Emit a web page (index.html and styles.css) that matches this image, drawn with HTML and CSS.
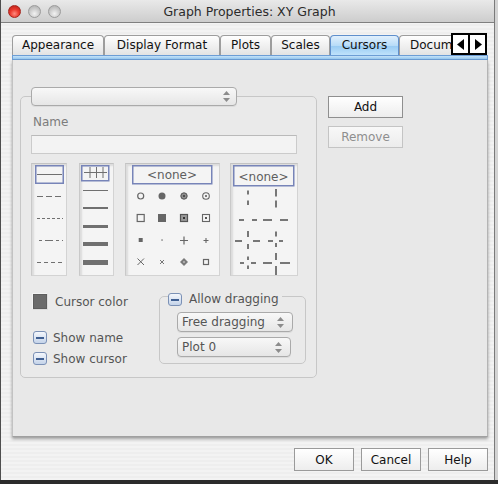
FILE: index.html
```html
<!DOCTYPE html>
<html>
<head>
<meta charset="utf-8">
<link rel="stylesheet" href="styles.css">
</head>
<body>
<div class="window">
  <div class="titlebar">
    <div class="lights"><span class="light red"></span><span class="light"></span><span class="light"></span></div>
    <div class="title">Graph Properties: XY Graph</div>
    <div></div>
  </div>

  <div class="tabs">
    <div class="tab t-app">Appearance</div>
    <div class="tab t-disp">Display Format</div>
    <div class="tab t-plots">Plots</div>
    <div class="tab t-scales">Scales</div>
    <div class="tab t-cursors selected">Cursors</div>
    <div class="tab t-doc">Documentation</div>
    <div class="scroller">
      <span class="arrow"><svg width="8" height="11" viewBox="0 0 8 11"><polygon points="7,0 7,11 0,5.5" fill="#000"/></svg></span>
      <span class="arrow"><svg width="8" height="11" viewBox="0 0 8 11"><polygon points="1,0 1,11 8,5.5" fill="#000"/></svg></span>
    </div>
  </div>
  <div class="tab-strip"></div>

  <div class="panel">
    <fieldset class="cursor-group">
      <legend class="main-legend">
        <div class="popup popup-main"><span></span>
          <svg class="updown" width="7" height="11" viewBox="0 0 7 11"><polygon points="0,4 3.5,0 7,4" fill="#8c8c8c"/><polygon points="0,7 3.5,11 7,7" fill="#8c8c8c"/></svg>
        </div>
      </legend>
      <div class="name-label">Name</div>
      <div class="textfield"></div>

      <div class="lists">
        <div class="list l1">
          <svg width="34" height="111" viewBox="0 0 34 111">
            <rect x="3.75" y="1.75" width="27.5" height="17.5" fill="none" stroke="#7784b8" stroke-width="1.5"/>
            <g stroke="#707070" stroke-width="1" fill="none">
              <line x1="5" y1="10.5" x2="30" y2="10.5"/>
              <line x1="5" y1="32.5" x2="31" y2="32.5" stroke-dasharray="6 3"/>
              <line x1="5" y1="54.5" x2="31" y2="54.5" stroke-dasharray="3 2"/>
              <line x1="7" y1="76.5" x2="31" y2="76.5" stroke-dasharray="3 3 8 3"/>
              <line x1="5" y1="98.5" x2="31" y2="98.5" stroke-dasharray="4 3"/>
            </g>
          </svg>
        </div>
        <div class="list l2">
          <svg width="33" height="111" viewBox="0 0 33 111">
            <rect x="1.75" y="1.75" width="27" height="15" fill="none" stroke="#7784b8" stroke-width="1.5"/>
            <g stroke="#707070" fill="none">
              <line x1="4" y1="8.5" x2="27" y2="8.5" stroke-width="1"/>
              <line x1="10" y1="3" x2="10" y2="14" stroke-width="1"/>
              <line x1="16.5" y1="3" x2="16.5" y2="14" stroke-width="1"/>
              <line x1="23" y1="3" x2="23" y2="14" stroke-width="1"/>
              <line x1="3" y1="26.5" x2="28" y2="26.5" stroke-width="1"/>
              <line x1="3" y1="44" x2="28" y2="44" stroke-width="2"/>
              <line x1="3" y1="62.5" x2="28" y2="62.5" stroke-width="3"/>
              <line x1="3" y1="80" x2="28" y2="80" stroke-width="4"/>
              <line x1="3" y1="98.5" x2="28" y2="98.5" stroke-width="5"/>
            </g>
          </svg>
        </div>
        <div class="list l3">
          <svg width="93" height="111" viewBox="0 0 93 111">
            <rect x="6.75" y="1.75" width="79" height="18" fill="none" stroke="#7784b8" stroke-width="1.5"/>
            <text x="46" y="15" text-anchor="middle" class="none-text">&lt;none&gt;</text>
            <g fill="#666" stroke="none">
              <circle cx="14.7" cy="32" r="3" fill="none" stroke="#666" stroke-width="1.2"/>
              <circle cx="36" cy="32" r="3.5"/>
              <circle cx="58" cy="32" r="3.2" fill="#8e8e8e" stroke="#555" stroke-width="1"/>
              <circle cx="58" cy="32" r="1" fill="#3a3a3a"/>
              <circle cx="80" cy="32" r="3.3" fill="none" stroke="#666" stroke-width="1.1"/>
              <circle cx="80" cy="32" r="1" fill="#555"/>

              <rect x="11.2" y="50.5" width="7" height="7" fill="none" stroke="#666" stroke-width="1.2"/>
              <rect x="32" y="50" width="8" height="8"/>
              <rect x="54.5" y="50.5" width="7" height="7" fill="#9a9a9a" stroke="#555" stroke-width="1.2"/>
              <rect x="57" y="53" width="2" height="2" fill="#333"/>
              <rect x="76.5" y="50.5" width="7" height="7" fill="none" stroke="#666" stroke-width="1.1"/>
              <rect x="79" y="53" width="2" height="2" fill="#555"/>

              <rect x="12.7" y="74" width="4" height="4"/>
              <rect x="35.3" y="75.3" width="1.5" height="1.5" fill="#888"/>
              <path d="M54 76.5 H62 M58 72.5 V80.5" stroke="#666" stroke-width="1.2" fill="none"/>
              <path d="M77.5 76.5 H82.5 M80 74 V79" stroke="#666" stroke-width="1.1" fill="none"/>

              <path d="M11.5 94.5 L18 101 M18 94.5 L11.5 101" stroke="#666" stroke-width="1" fill="none"/>
              <path d="M34 96 L38 100 M38 96 L34 100" stroke="#777" stroke-width="1" fill="none"/>
              <path d="M58 94 L62 98 L58 102 L54 98 Z" fill="#7a7a7a"/>
              <circle cx="58" cy="98" r="1" fill="#bbb"/>
              <rect x="77.5" y="95.5" width="5" height="5" fill="none" stroke="#666" stroke-width="1.2"/>
            </g>
          </svg>
        </div>
        <div class="list l4">
          <svg width="66" height="111" viewBox="0 0 66 111">
            <rect x="2.75" y="1.75" width="60" height="20" fill="none" stroke="#7784b8" stroke-width="1.5"/>
            <text x="32.5" y="16.5" text-anchor="middle" class="none-text">&lt;none&gt;</text>
            <g stroke="#777" stroke-width="2" fill="none">
              <path d="M17 26.5 V30.5 M17 36.5 V41"/>
              <path d="M45 25 V32.5 M45 36.5 V43.5"/>
              <path d="M8 56 H13 M21 56 H26"/>
              <path d="M32 56 H41 M49 56 H57"/>
              <path d="M4 77 H11 M22 77 H29 M17 67 V73 M17 80 V85"/>
              <path d="M37 77 H42 M48 77 H52 M45 67.5 V72.5 M45 79 V83"/>
              <path d="M9 99 H13 M20 99 H25 M17 92.5 V96 M17 101.5 V105"/>
              <path d="M32 99 H41 M49 99 H59 M45 89 V96 M45 102 V111"/>
            </g>
          </svg>
        </div>
      </div>

      <div class="lower">
        <div class="lower-left">
          <div class="color-row"><span class="swatch"></span><span class="dim">Cursor color</span></div>
          <div class="check-row first"><span class="check"></span><span class="dim">Show name</span></div>
          <div class="check-row"><span class="check"></span><span class="dim">Show cursor</span></div>
        </div>
        <fieldset class="drag-group">
          <legend class="drag-legend"><span class="legend-inner"><span class="check"></span><span class="dim">Allow dragging</span></span></legend>
          <div class="popup p-free"><span>Free dragging</span>
            <svg class="updown" width="7" height="11" viewBox="0 0 7 11"><polygon points="0,4 3.5,0 7,4" fill="#8c8c8c"/><polygon points="0,7 3.5,11 7,7" fill="#8c8c8c"/></svg>
          </div>
          <div class="popup p-plot"><span>Plot 0</span>
            <svg class="updown" width="7" height="11" viewBox="0 0 7 11"><polygon points="0,4 3.5,0 7,4" fill="#8c8c8c"/><polygon points="0,7 3.5,11 7,7" fill="#8c8c8c"/></svg>
          </div>
        </fieldset>
      </div>
    </fieldset>

    <div class="side-buttons">
      <button class="btn add">Add</button>
      <button class="btn remove">Remove</button>
    </div>
  </div>

  <div class="dialog-buttons">
    <button class="btn dlg">OK</button>
    <button class="btn dlg">Cancel</button>
    <button class="btn dlg">Help</button>
  </div>
</div>
</body>
</html>
```

FILE: styles.css
```css
html, body {
  margin: 0;
  padding: 0;
}
body {
  width: 498px;
  height: 484px;
  overflow: hidden;
  background: linear-gradient(to bottom, #d3d3d3 0, #d3d3d3 480px, #2b2b2b 480px);
}
.window {
  width: 495px;
  height: 480px;
  box-sizing: border-box;
  border-left: 1px solid #4e4e4e;
  border-right: 1px solid #7a7a7a;
  background: repeating-linear-gradient(to bottom, #eeeeee 0, #eeeeee 2px, #f3f3f3 2px, #f3f3f3 4px);
  font-family: "DejaVu Sans", sans-serif;
  font-size: 12px;
  color: #111;
  display: flex;
  flex-direction: column;
}

/* title bar */
.titlebar {
  height: 22px;
  border-bottom: 1px solid #7f7f7f;
  display: grid;
  grid-template-columns: 1fr auto 1fr;
  align-items: center;
  background: linear-gradient(#e9e9e9, #cdcdcd);
}
.lights {
  display: flex;
  gap: 7px;
  padding-left: 7px;
  margin-top: 1px;
}
.light {
  width: 13px;
  height: 13px;
  box-sizing: border-box;
  border-radius: 50%;
  border: 1px solid #9b9b9b;
  background: radial-gradient(circle at 50% 70%, #f2f2f2 0, #d0d0d0 45%, #a9a9a9 100%);
}
.light.red {
  border-color: #a5241c;
  background: radial-gradient(circle at 50% 70%, #ff8c80 0, #ec3a2e 45%, #b01d14 100%);
}
.title {
  font-size: 12.5px;
  color: #2b2b2b;
  padding-left: 4px;
  white-space: nowrap;
}

/* tabs */
.tabs {
  display: flex;
  align-items: flex-end;
  height: 22px;
  margin: 10px 0 0 11px;
}
.tab {
  height: 20px;
  box-sizing: border-box;
  border: 1px solid #9d9d9d;
  border-bottom: 0;
  border-radius: 4px 4px 0 0;
  background: linear-gradient(#fefefe, #e3e3e3);
  line-height: 19px;
  text-align: center;
  white-space: nowrap;
  overflow: hidden;
}
.t-app { width: 92px; }
.t-disp { width: 116px; }
.t-plots { width: 51px; }
.t-scales { width: 59px; }
.t-cursors { width: 69px; }
.t-doc { width: 52px; text-align: left; padding-left: 10px; border-right: 0; border-radius: 4px 0 0 0; }
.tab.selected {
  border-color: #5f8fcc;
  background: linear-gradient(#e1f0fd 0, #b8dcf8 50%, #98cbf3 52%, #bfe2fb 100%);
}
.scroller {
  width: 36px;
  height: 22px;
  box-sizing: border-box;
  border: 2px solid #000;
  background: #fff;
  display: flex;
}
.arrow {
  flex: 1;
  display: flex;
  align-items: center;
  justify-content: center;
}
.arrow:first-child {
  border-right: 2px solid #000;
}
.tab-strip {
  margin-left: 11px;
  width: 476px;
  height: 5px;
  box-sizing: border-box;
  border: 1px solid #6c9dd5;
  background: linear-gradient(#c6e2f8, #94c7ef);
}

/* panel */
.panel {
  margin-left: 11px;
  width: 476px;
  height: 377px;
  box-sizing: border-box;
  background: #e8e8e8;
  border-left: 1px solid #c2c2c2;
  border-right: 1px solid #b4b4b4;
  border-bottom: 1px solid #a0a0a0;
  box-shadow: 0 2px 3px rgba(0, 0, 0, 0.35);
  display: flex;
  align-items: flex-start;
  padding: 27px 0 0 7px;
}
.cursor-group {
  margin: 0;
  width: 297px;
  min-inline-size: 0;
  box-sizing: border-box;
  border: 1px solid #c7c7c7;
  border-radius: 5px;
  padding: 9px 8px 12px 10px;
  background: #eaeaea;
}
.main-legend {
  padding: 0;
  margin: 0;
}
.popup {
  box-sizing: border-box;
  border: 1px solid #aaaaaa;
  border-radius: 4px;
  background: linear-gradient(#f8f8f8, #e6e6e6);
  display: flex;
  align-items: center;
  justify-content: space-between;
  padding: 0 6px 0 4px;
  color: #555;
  box-shadow: 0 1px 0 rgba(0, 0, 0, 0.06);
}
.popup-main {
  width: 206px;
  height: 19px;
}
.name-label {
  color: #7c7c7c;
  line-height: 15px;
  padding-left: 2px;
}
.textfield {
  margin-top: 5px;
  width: 266px;
  height: 19px;
  box-sizing: border-box;
  border: 1px solid #cbcbcb;
  border-top-color: #bababa;
  background: #f3f3f3;
}

/* lists */
.lists {
  margin-top: 9px;
  display: flex;
  height: 113px;
}
.list {
  height: 113px;
  box-sizing: border-box;
  background: #f4f4f4;
  border: 1px solid #d3d3d3;
  border-top-color: #c3c3c3;
  border-left-color: #c9c9c9;
  box-shadow: inset 2px 2px 2px rgba(0, 0, 0, 0.10);
}
.list svg { display: block; }
.l1 { width: 36px; }
.l2 { width: 35px; margin-left: 12px; }
.l3 { width: 95px; margin-left: 11px; }
.l4 { width: 68px; margin-left: 10px; }
.none-text {
  font-family: "DejaVu Sans", sans-serif;
  font-size: 12px;
  fill: #5f5f5f;
}

/* lower area */
.lower {
  display: flex;
  align-items: flex-start;
  margin-top: 9px;
}
.lower-left {
  width: 128px;
  padding-top: 8px;
}
.dim { color: #555; }
.color-row {
  display: flex;
  align-items: center;
  height: 17px;
}
.swatch {
  width: 16px;
  height: 17px;
  margin-left: 1px;
  margin-right: 7px;
  box-sizing: border-box;
  border: 1px solid #dcdcdc;
  border-top-color: #f4f4f4;
  border-left-color: #f4f4f4;
  background: #6b6b6b;
  box-shadow: inset 0 0 0 1px #5e5e5e;
}
.check-row {
  display: flex;
  align-items: center;
  height: 13px;
  margin-top: 8px;
  padding-left: 2px;
}
.check-row.first { margin-top: 21px; }
.check {
  width: 14px;
  height: 13px;
  box-sizing: border-box;
  border: 1px solid #7b91b6;
  border-radius: 3px;
  background: linear-gradient(#f4f7fc, #c4d3e9);
  display: flex;
  align-items: center;
  justify-content: center;
  margin-right: 6px;
  flex: none;
}
.check::after {
  content: "";
  width: 8px;
  height: 2px;
  background: #3f5f92;
}
.drag-group {
  margin: 0;
  width: 147px;
  min-inline-size: 0;
  box-sizing: border-box;
  border: 1px solid #c7c7c7;
  border-radius: 5px;
  padding: 5px 8px 6px 8px;
}
.drag-legend {
  margin: 0;
  padding: 7px 3px 0 0;
}
.legend-inner {
  display: flex;
  align-items: center;
  line-height: 15px;
}
.legend-inner .check { margin-right: 7px; }
.p-free {
  width: 116px;
  height: 20px;
  margin-left: 9px;
  padding-right: 8px;
}
.p-plot {
  width: 114px;
  height: 20px;
  margin-left: 9px;
  margin-top: 5px;
  padding-right: 8px;
}

/* buttons */
.side-buttons {
  display: flex;
  flex-direction: column;
  gap: 8px;
  margin: 9px 0 0 11px;
}
.btn {
  font-family: "DejaVu Sans", sans-serif;
  font-size: 12px;
  width: 75px;
  height: 22px;
  padding: 0;
  border: 1px solid #8f8f8f;
  border-radius: 0;
  background: linear-gradient(#ffffff, #ededed);
  color: #111;
}
.btn.remove {
  border-color: #c4c4c4;
  color: #8e8e8e;
  background: linear-gradient(#f8f8f8, #ececec);
}
.dialog-buttons {
  display: flex;
  justify-content: flex-end;
  gap: 7px;
  margin-top: 11px;
  padding-right: 6px;
}
.btn.dlg {
  width: 60px;
  height: 23px;
  border-color: #9a9a9a;
}
```
